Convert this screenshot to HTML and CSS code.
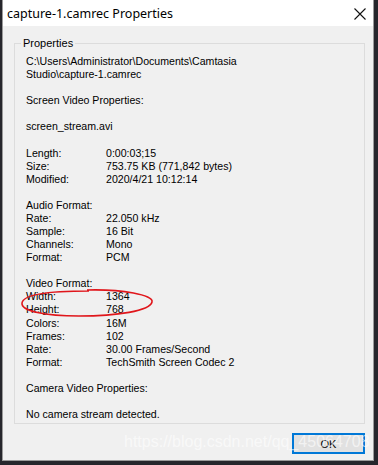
FILE: index.html
```html
<!DOCTYPE html>
<html>
<head>
    <title>capture-1.camrec Properties</title>
    <link rel="stylesheet" href="styles.css">
</head>
<body>
    <!-- the dialog window -->
    <div class="window">
        <div class="titlebar">
            <span class="title">capture-1.camrec Properties</span>
            <svg class="close" width="12" height="12" viewBox="0 0 12 12">
                <path d="M0.5 0.5 L11.5 11.5 M11.5 0.5 L0.5 11.5" stroke="#111" stroke-width="1.1" fill="none"/>
            </svg>
        </div>

        <div class="content">
            <fieldset class="group">
                <legend>Properties</legend>
                <p>C:\Users\Administrator\Documents\Camtasia<br>Studio\capture-1.camrec</p>
                <p class="gap">Screen Video Properties:</p>
                <p class="gap">screen_stream.avi</p>

                <div class="rows gap">
                    <span>Length:</span><span>0:00:03;15</span>
                    <span>Size:</span><span>753.75 KB (771,842 bytes)</span>
                    <span>Modified:</span><span>2020/4/21 10:12:14</span>
                </div>

                <p class="gap">Audio Format:</p>
                <div class="rows">
                    <span>Rate:</span><span>22.050 kHz</span>
                    <span>Sample:</span><span>16 Bit</span>
                    <span>Channels:</span><span>Mono</span>
                    <span>Format:</span><span>PCM</span>
                </div>

                <p class="gap">Video Format:</p>
                <div class="rows">
                    <span>Width:</span><span>1364</span>
                    <span>Height:</span><span>768</span>
                    <span>Colors:</span><span>16M</span>
                    <span>Frames:</span><span>102</span>
                    <span>Rate:</span><span>30.00 Frames/Second</span>
                    <span>Format:</span><span>TechSmith Screen Codec 2</span>
                </div>

                <p class="gap">Camera Video Properties:</p>
                <p class="gap">No camera stream detected.</p>
            </fieldset>

            <div class="buttons">
                <button class="ok">OK</button>
            </div>
        </div>
    </div>

    <!-- red hand-drawn mark round width and height -->
    <svg class="mark" width="140" height="32" viewBox="0 0 140 32">
        <path d="M70 3 C105 2 137 8 135 15 C133 24 100 29 62 29 C28 29 4 24 5 16 C6 8 30 4 72 4" stroke="#e0161b" stroke-width="1.6" fill="none"/>
    </svg>

    <!-- watermark -->
    <div class="watermark">https://blog.csdn.net/qq_45064708</div>
</body>
</html>
```
FILE: styles.css
```css
/* the page behind the dialog */
body {
    margin: 0;
    padding: 0;
    background: #26262c;
    font-family: "Liberation Sans", Arial, sans-serif;
    font-size: 10.6px;
    color: #000;
    position: relative;
    width: 378px;
    height: 465px;
    overflow: hidden;
}

/* the dialog window */
.window {
    width: 372px;
    height: 461px;
    margin-left: 2px;
    background: #f0f0f0;
    border: 1px solid #9a9a9a;
    border-top: none;
    box-sizing: border-box;
}

.titlebar {
    height: 26px;
    background: #fff;
    display: flex;
    align-items: center;
    justify-content: space-between;
    padding: 0 7px 0 4px;
}
.title {
    font-family: "Noto Sans", "Open Sans", sans-serif;
    font-size: 12.5px;
    color: #000;
}
.close {
    margin-top: 1px;
}

.content {
    padding: 11px 8px 0 11px;
}

/* group box */
.group {
    margin: 0;
    padding: 5px 10px 2px 11px;
    border: 1px solid #dcdcdc;
    min-width: 0;
}
.group legend {
    padding: 0 2px;
    margin-left: -5px;
    line-height: 13px;
    font-size: 11px;
}

p {
    margin: 0;
    line-height: 13.08px;
}
.gap {
    margin-top: 13.08px;
}

.rows {
    display: grid;
    grid-template-columns: 80px 1fr;
    line-height: 13.08px;
}

/* OK button */
.buttons {
    display: flex;
    justify-content: flex-end;
    margin-top: 9px;
}
.ok {
    width: 73px;
    height: 21px;
    background: #e1e1e1;
    border: 2px solid #0078d7;
    font-family: "Liberation Sans", Arial, sans-serif;
    font-size: 11px;
    padding: 0;
}

/* overlays */
.mark {
    position: absolute;
    left: 17px;
    top: 287px;
}
.watermark {
    position: absolute;
    left: 124px;
    top: 433px;
    font-family: "Liberation Sans", Arial, sans-serif;
    font-size: 16px;
    color: rgba(255, 255, 255, 0.6);
    white-space: nowrap;
}
```
